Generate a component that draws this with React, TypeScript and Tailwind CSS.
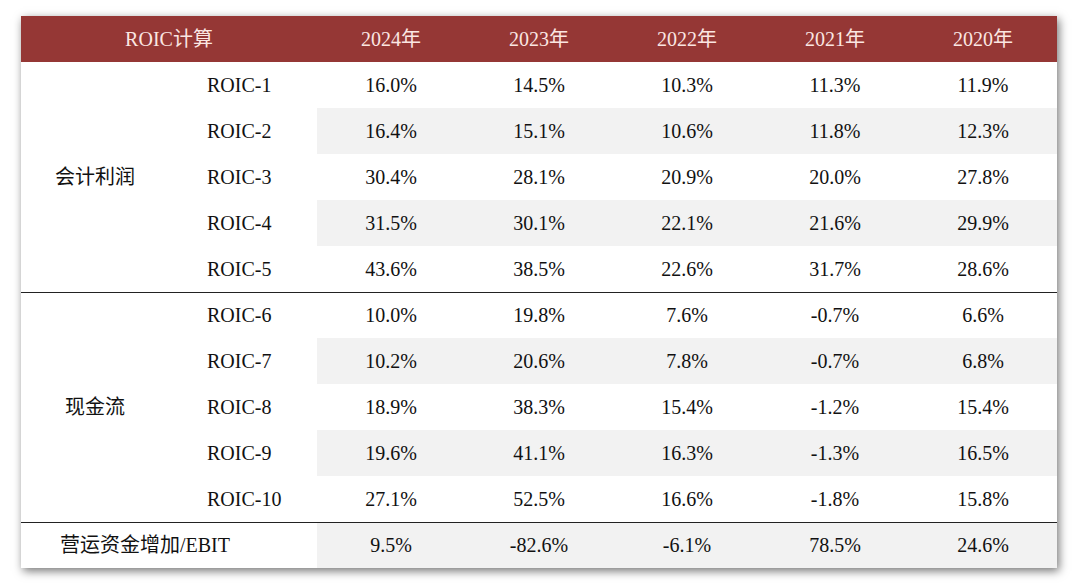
import React from 'react';

const years = ['2024年', '2023年', '2022年', '2021年', '2020年'];

// 会计利润 / 现金流 分组
const groups = [
  {
    name: '会计利润',
    rows: [
      ['ROIC-1', '16.0%', '14.5%', '10.3%', '11.3%', '11.9%'],
      ['ROIC-2', '16.4%', '15.1%', '10.6%', '11.8%', '12.3%'],
      ['ROIC-3', '30.4%', '28.1%', '20.9%', '20.0%', '27.8%'],
      ['ROIC-4', '31.5%', '30.1%', '22.1%', '21.6%', '29.9%'],
      ['ROIC-5', '43.6%', '38.5%', '22.6%', '31.7%', '28.6%'],
    ],
  },
  {
    name: '现金流',
    rows: [
      ['ROIC-6', '10.0%', '19.8%', '7.6%', '-0.7%', '6.6%'],
      ['ROIC-7', '10.2%', '20.6%', '7.8%', '-0.7%', '6.8%'],
      ['ROIC-8', '18.9%', '38.3%', '15.4%', '-1.2%', '15.4%'],
      ['ROIC-9', '19.6%', '41.1%', '16.3%', '-1.3%', '16.5%'],
      ['ROIC-10', '27.1%', '52.5%', '16.6%', '-1.8%', '15.8%'],
    ],
  },
];

const lastRow = ['9.5%', '-82.6%', '-6.1%', '78.5%', '24.6%'];

const font = { fontFamily: '"Liberation Serif", "Noto Sans CJK SC", serif' };

export default function App() {
  return (
    <div className="min-h-[583px] w-[1079px] bg-white pt-[16px] pl-[21px]" style={font}>
      <div className="w-[1036px] bg-white shadow-[2px_3px_9px_rgba(0,0,0,0.55)]">
        <table className="w-[1036px] table-fixed border-collapse text-[20px] text-[#111]">
          <colgroup>
            {Array.from({ length: 7 }).map((_, i) => (
              <col key={i} className="w-[148px]" />
            ))}
          </colgroup>
          <thead>
            <tr className="h-[46px] bg-[#953735] text-[#fbe6e2]">
              <th colSpan={2} className="font-normal text-center">ROIC计算</th>
              {years.map(y => (
                <th key={y} className="font-normal text-center">{y}</th>
              ))}
            </tr>
          </thead>
          <tbody>
            {groups.map(g =>
              g.rows.map((r, idx) => {
                const shaded = idx % 2 === 1;
                const last = idx === g.rows.length - 1;
                return (
                  <tr key={r[0]} className={`h-[46px] ${last ? 'border-b border-[#222]' : ''}`}>
                    {idx === 0 && (
                      <td rowSpan={g.rows.length} className="text-center align-middle">{g.name}</td>
                    )}
                    <td className="pl-[38px] text-left">{r[0]}</td>
                    {r.slice(1).map((v, i) => (
                      <td key={i} className={`text-center ${shaded ? 'bg-[#f2f2f2]' : ''}`}>{v}</td>
                    ))}
                  </tr>
                );
              })
            )}
            <tr className="h-[46px]">
              <td colSpan={2} className="pl-[39px] text-left">营运资金增加/EBIT</td>
              {lastRow.map((v, i) => (
                <td key={i} className="text-center bg-[#f2f2f2]">{v}</td>
              ))}
            </tr>
          </tbody>
        </table>
      </div>
    </div>
  );
}
